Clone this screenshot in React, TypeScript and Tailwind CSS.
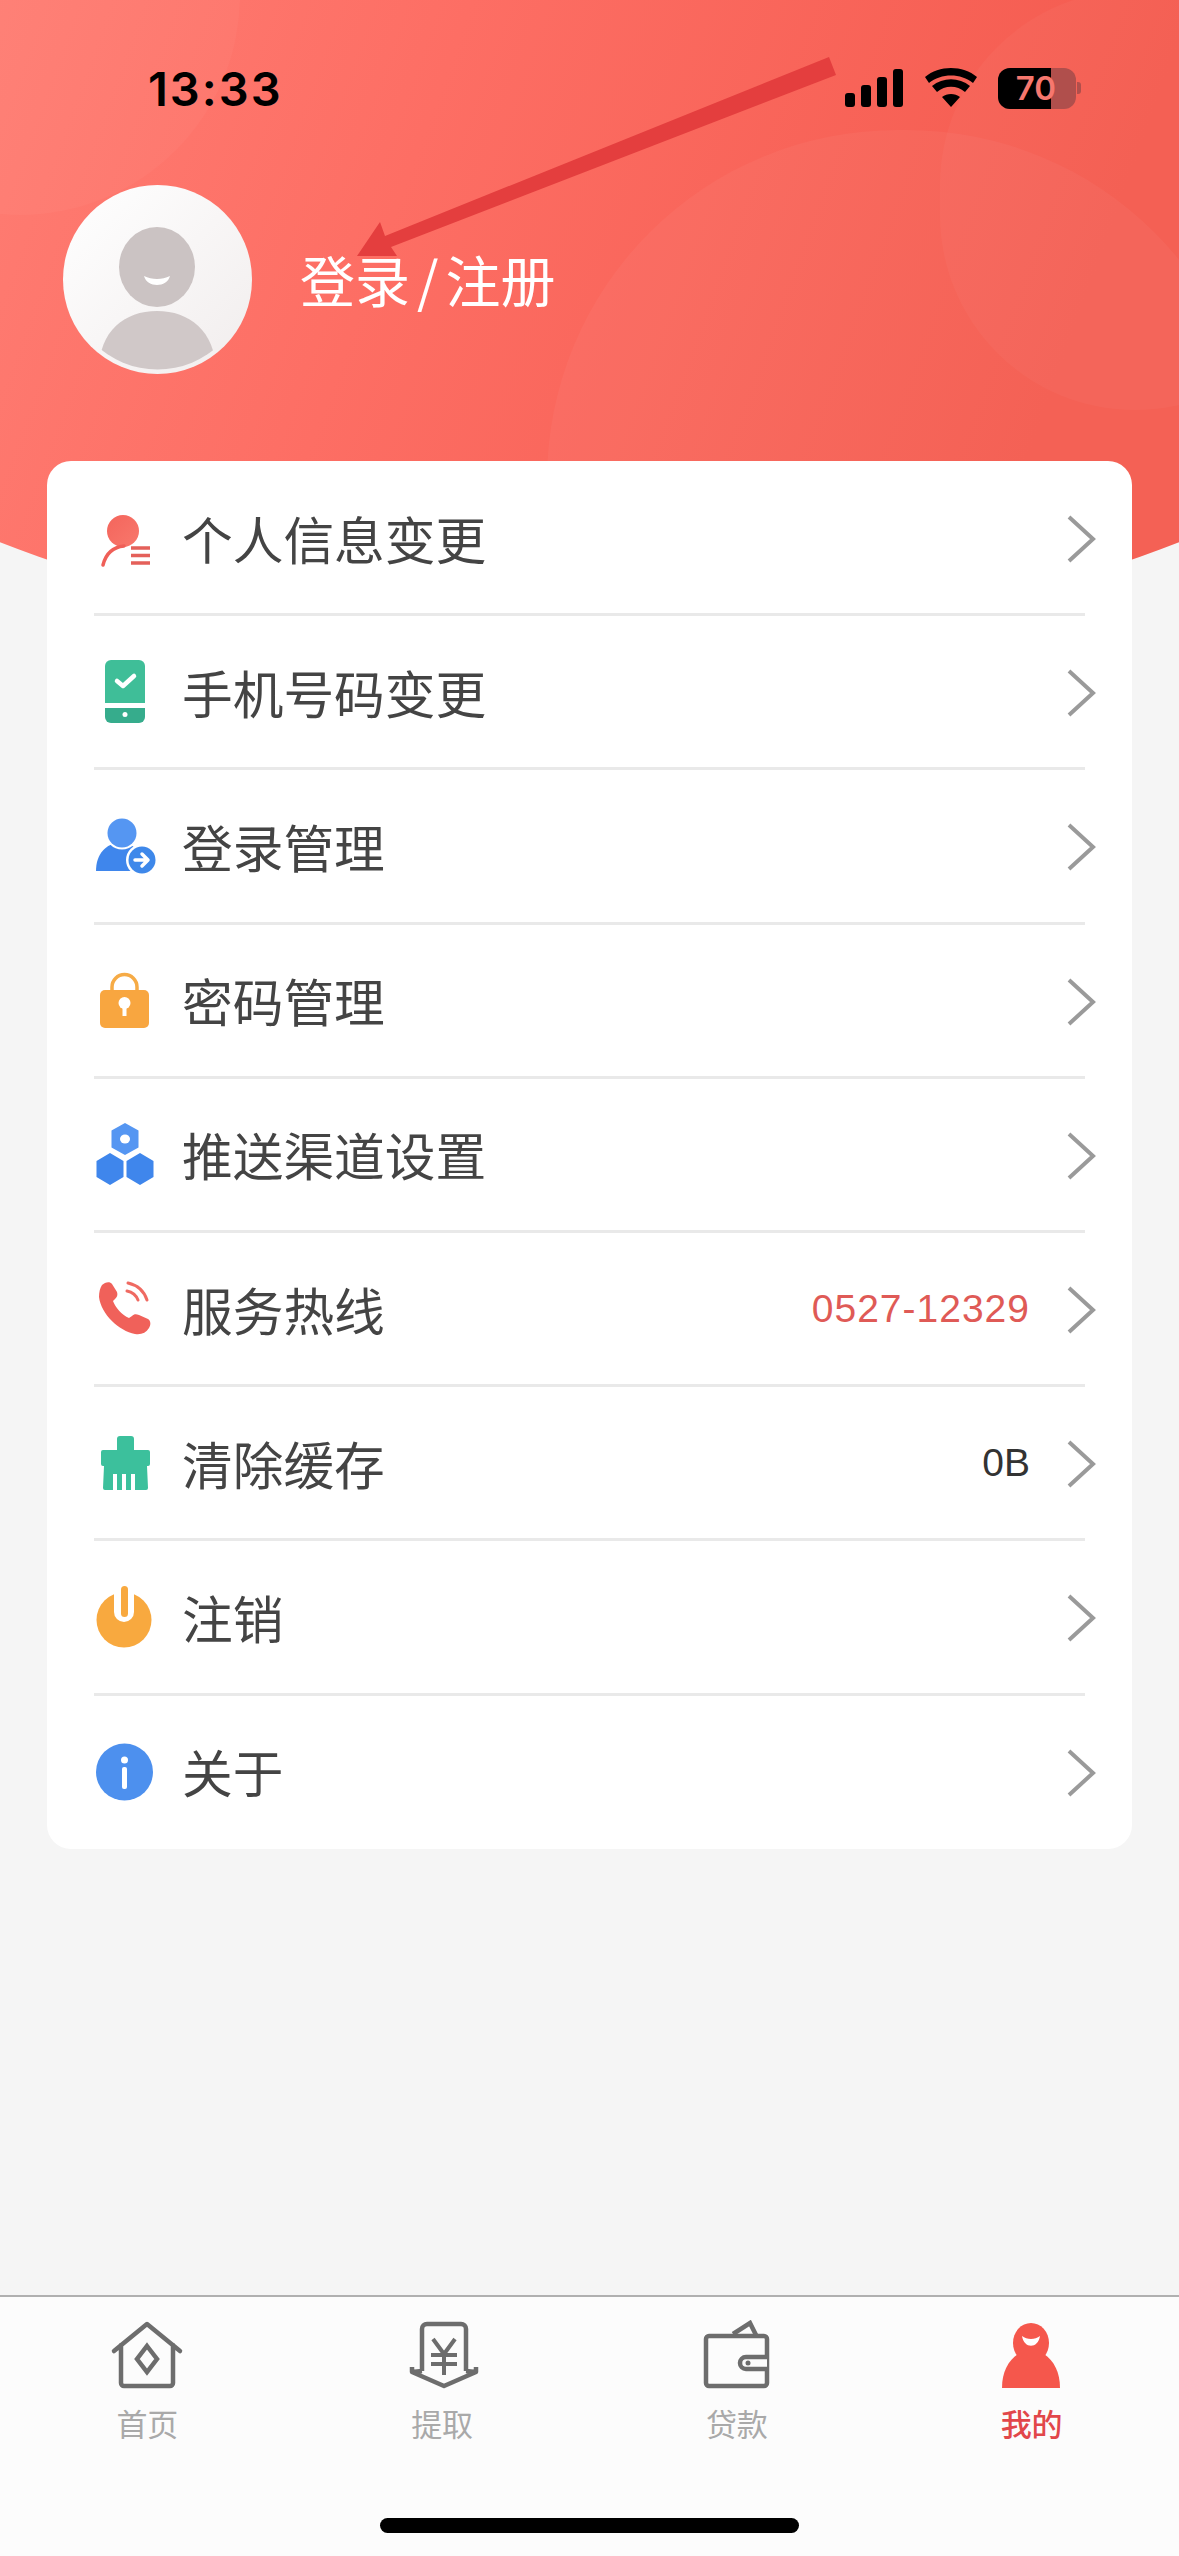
import type { ReactNode } from "react";

const cjk = "font-['Noto_Sans_CJK_SC','Noto_Sans',sans-serif]";

const IconPerson = () => (
  <svg width="60" height="60" viewBox="95 508 60 60">
    <defs>
      <linearGradient id="gr1" x1="0" y1="0" x2="1" y2="1">
        <stop offset="0" stopColor="#f4655c" />
        <stop offset="1" stopColor="#f8786c" />
      </linearGradient>
    </defs>
    <circle cx="123" cy="531" r="16" fill="url(#gr1)" />
    <path d="M103 565 C106 553 114 547 124 546" fill="none" stroke="#ef5f58" strokeWidth="3.500" strokeLinecap="round" />
    <path d="M131 548h19M131 555.500h19M131 563h19" stroke="#e4605a" strokeWidth="3.500" />
  </svg>
);

const IconPhone = () => (
  <svg width="60" height="70" viewBox="96 659 60 70">
    <path d="M112 662h28a6 6 0 0 1 6 6v37h-40v-37a6 6 0 0 1 6-6z" fill="#3fbe98" />
    <path d="M106 710h40v9a6 6 0 0 1-6 6h-28a6 6 0 0 1-6-6z" fill="#36ac8c" />
    <path d="M118 683l6 5 11-10" fill="none" stroke="#fff" strokeWidth="4.500" strokeLinecap="round" strokeLinejoin="round" />
    <circle cx="126" cy="716.500" r="2.500" fill="#fff" />
  </svg>
);

const IconLogin = () => (
  <svg width="64" height="60" viewBox="93 820 64 60">
    <path d="M96 875c0-17 10-28 24-28s22 8 24 28z" fill="#3f86ec" />
    <circle cx="122" cy="837" r="16.500" fill="#fff" />
    <circle cx="122" cy="837" r="14.500" fill="#5596f2" />
    <circle cx="142" cy="864" r="16" fill="#fff" />
    <circle cx="142" cy="864" r="13.500" fill="#3e88ea" />
    <path d="M135 864h12M142 858l6 6-6 6" fill="none" stroke="#fff" strokeWidth="3.500" strokeLinecap="round" strokeLinejoin="round" />
  </svg>
);

const IconLock = () => (
  <svg width="60" height="60" viewBox="96 973 60 60">
    <path d="M113 995v-6a12.500 12.500 0 0 1 25 0v6" fill="none" stroke="#f6ab46" strokeWidth="3.500" />
    <rect x="101" y="992" width="49" height="38" rx="5" fill="#f8a640" />
    <circle cx="125.500" cy="1005" r="6" fill="#fff" />
    <rect x="123.500" y="1005" width="4" height="13" fill="#fff" />
  </svg>
);

const IconHex = () => (
  <svg width="64" height="64" viewBox="94 1125 64 64">
    <path d="M126 1125l13.500 7.500v17l-13.500 7.500-13.500-7.500v-17z" fill="#5596f2" />
    <ellipse cx="126" cy="1141" rx="5" ry="4.500" fill="#fff" />
    <path d="M111 1155l13.500 8v16l-13.500 8-13.500-8v-16z" fill="#3f86ec" />
    <path d="M141 1155l13.500 8v16l-13.500 8-13.500-8v-16z" fill="#3f86ec" />
  </svg>
);

const IconCall = () => (
  <svg width="60" height="60" viewBox="96 1280 60 60">
    <path
      d="M103 1286c3-3 8-4 10-1l5 8c1 3 0 5-2 7l-2 2c2 6 9 14 16 17l3-2c2-2 4-2 7-1l9 4c3 2 3 6 1 9-3 5-8 7-14 6-16-3-34-20-36-37 0-5 1-9 3-12z"
      fill="#f0615a"
    />
    <path d="M128 1292c5 1 9 4 11 9M129 1284c9 2 16 8 19 17" fill="none" stroke="#ef6a62" strokeWidth="3" strokeLinecap="round" />
  </svg>
);

const IconBrush = () => (
  <svg width="60" height="60" viewBox="96 1434 60 60">
    <path
      d="M119 1437h13a3 3 0 0 1 3 3v11h14a2 2 0 0 1 2 2v12a2 2 0 0 1-2 2h-1l1 22a2 2 0 0 1-2 2h-41a2 2 0 0 1-2-2l1-22h-1a2 2 0 0 1-2-2v-12a2 2 0 0 1 2-2h14v-11a3 3 0 0 1 3-3z"
      fill="#3cc09c"
    />
    <path d="M114 1475h4v16h-4zM123 1475h4v16h-4zM132 1475h4v16h-4z" fill="#fff" />
  </svg>
);

const IconPower = () => (
  <svg width="60" height="68" viewBox="96 1584 60 68">
    <circle cx="125" cy="1621" r="27.500" fill="#f8a93f" />
    <rect x="115" y="1584" width="20" height="39" rx="10" fill="#fff" />
    <rect x="122" y="1587" width="7" height="31" rx="3.500" fill="#f8a93f" />
  </svg>
);

const IconInfo = () => (
  <svg width="60" height="60" viewBox="96 1743 60 60">
    <circle cx="125.500" cy="1773" r="28.500" fill="#4d90ee" />
    <circle cx="125.500" cy="1761" r="3.500" fill="#fff" />
    <rect x="123" y="1768" width="5" height="22" rx="2" fill="#fff" />
  </svg>
);

const Chevron = () => (
  <svg width="30" height="50" viewBox="0 0 30 50" className="shrink-0 -mr-[11px] ml-[36px] mt-[2px]">
    <path d="M3 3l24 22-24 22" fill="none" stroke="#9a9a9a" strokeWidth="4" />
  </svg>
);

type RowProps = { icon: ReactNode; label: string; value?: string; valueClass?: string; last?: boolean };

const Row = ({ icon, label, value, valueClass, last }: RowProps) => (
  <div className="h-[154.2px] mx-[47px] relative flex items-center">
    <div className="w-[70px] -ml-[4px] shrink-0 flex justify-center">{icon}</div>
    <div className={`${cjk} flex-1 ml-[22px] text-[50.7px] leading-none text-[#444444]`}>{label}</div>
    {value && <div className={`font-['Liberation_Sans',sans-serif] text-[39px] ${valueClass}`}>{value}</div>}
    <Chevron />
    {!last && <div className="absolute left-0 right-0 -bottom-[1px] h-[3px] bg-[#e9e9e9]" />}
  </div>
);

const TabHome = () => (
  <svg width="74" height="70" viewBox="110 2319 74 70">
    <path d="M114 2350L147 2323l33 27M121 2344v38a3 3 0 0 0 3 3h46a3 3 0 0 0 3-3v-38" fill="none" stroke="#6d6d6d" strokeWidth="4.500" strokeLinejoin="round" strokeLinecap="round" />
    <path d="M147 2345l10 13-10 13-10-13z" fill="none" stroke="#6d6d6d" strokeWidth="4.500" />
  </svg>
);

const TabWithdraw = () => (
  <svg width="74" height="70" viewBox="405 2319 74 70">
    <path d="M422 2370v-42a5 5 0 0 1 5-5h34a5 5 0 0 1 5 5v42" fill="none" stroke="#6d6d6d" strokeWidth="4.500" />
    <path d="M412 2366v5l32 14 32-14v-5M412 2371l10-1M476 2371l-10-1" fill="none" stroke="#6d6d6d" strokeWidth="4.500" strokeLinejoin="round" />
    <path d="M433 2338l11 15 11-15M431 2354h26M431 2363h26M444 2353v21" fill="none" stroke="#6d6d6d" strokeWidth="4" />
  </svg>
);

const TabWallet = () => (
  <svg width="74" height="70" viewBox="700 2319 74 70">
    <path d="M710 2335h54a3 3 0 0 1 3 3v44a3 3 0 0 1-3 3h-55a3 3 0 0 1-3-3v-44a3 3 0 0 1 3-3z" fill="none" stroke="#6d6d6d" strokeWidth="4.500" />
    <path d="M733 2333l17-11 6 12" fill="none" stroke="#6d6d6d" strokeWidth="4.500" />
    <path d="M767 2356h-21a6 6 0 0 0 0 12h21" fill="#fcfcfc" stroke="#6d6d6d" strokeWidth="4.500" />
    <circle cx="748" cy="2362" r="2.500" fill="#6d6d6d" />
  </svg>
);

const TabMe = () => (
  <svg width="74" height="70" viewBox="995 2319 74 70">
    <ellipse cx="1031" cy="2342" rx="18" ry="20" fill="#f5574c" />
    <path d="M1002 2387c0-16 6-27 16-34h26c10 7 16 18 16 34z" fill="#f5574c" />
    <path d="M1022 2335c2 13 16 13 18 0-5 4-13 4-18 0z" fill="#fff" />
  </svg>
);

const Tab = ({ icon, label, active }: { icon: ReactNode; label: string; active?: boolean }) => (
  <div className="flex flex-col items-center">
    {icon}
    <div className={`${cjk} mt-[15px] text-[31px] leading-[36px] ${active ? "text-[#e2474a] font-medium" : "text-[#a9a9a9]"}`}>{label}</div>
  </div>
);

const StatusBar = () => (
  <div className="relative h-[44px] flex items-center justify-between pl-[148px] pr-[98px]">
    <span className="font-['Inter',sans-serif] text-[47px] font-semibold tracking-[2px] leading-none text-black">13:33</span>
    <div className="flex items-center">
      <svg width="60" height="40" viewBox="0 0 60 40">
        <rect x="1" y="25" width="10" height="14" rx="3" />
        <rect x="17" y="17" width="10" height="22" rx="3" />
        <rect x="33" y="9" width="10" height="30" rx="3" />
        <rect x="49" y="1" width="10" height="38" rx="3" />
      </svg>
      <svg width="52" height="40" viewBox="0 0 52 40" className="ml-[21px]">
        <path d="M26 39l-9-10c5-4 13-4 18 0zM12 24l-5-6c11-9 27-9 38 0l-5 6c-8-7-20-7-28 0zM4 15l-4-6C14-3 38-3 52 9l-4 6C36 5 16 5 4 15z" />
      </svg>
      <div className="ml-[21px] relative w-[78px] h-[41px] rounded-[12px] overflow-hidden bg-[#b04f4c] flex items-center justify-center">
        <div className="absolute left-0 top-0 bottom-0 w-[53px] bg-black" />
        <span className="relative font-['Inter',sans-serif] font-semibold text-[33px] leading-none text-[#f6776e] pr-[2px]">70</span>
      </div>
      <div className="w-[4px] h-[12px] bg-[#b04f4c] rounded-r-[3px] ml-[1px]" />
    </div>
  </div>
);

const Avatar = () => (
  <div className="w-[189px] h-[189px] rounded-full bg-gradient-to-br from-white to-[#f1eded] overflow-hidden shrink-0">
    <svg width="189" height="189" viewBox="63 185 189 189">
      <defs>
        <clipPath id="avatarClip">
          <circle cx="157.500" cy="279.500" r="90" />
        </clipPath>
      </defs>
      <ellipse cx="157" cy="267" rx="38" ry="40" fill="#cbc3c3" />
      <path d="M144 276c3 12 23 12 26 0-8 4-18 4-26 0z" fill="#fff" />
      <path d="M99 375c-2-42 24-64 58-64s60 22 59 64z" fill="#d0c8c8" clipPath="url(#avatarClip)" />
    </svg>
  </div>
);

const Arrow = () => (
  <svg width="1179" height="300" viewBox="0 0 1179 300" className="absolute left-0 top-0 pointer-events-none">
    <polygon points="357,256 380,222 385,236 829,57 836,75 391,247 397,256" fill="#e43e3e" />
  </svg>
);

export default function App() {
  return (
    <div className="relative w-[1179px] h-[2556px] overflow-hidden bg-[#f5f5f5] flex flex-col">
      {/* red header backdrop */}
      <div className="absolute left-[-700px] top-[-1300px] w-[2579px] h-[1950px] rounded-[50%] overflow-hidden bg-[linear-gradient(110deg,#ff857b_27%,#fd6e64_50%,#f45b4f_72%)]">
        <div className="absolute left-[500px] top-[1000px] w-[440px] h-[515px] rounded-full bg-white/[0.03]" />
        <div className="absolute left-[1247px] top-[1430px] w-[710px] h-[700px] rounded-full bg-white/[0.04]" />
        <div className="absolute left-[1640px] top-[1290px] w-[390px] h-[420px] rounded-full bg-white/[0.03]" />
      </div>

      <div className="relative pt-[66px]">
        <StatusBar />
        <div className="flex items-start pl-[63px] pt-[75px] h-[351px]">
          <Avatar />
          <div className={`${cjk} ml-[48px] mt-[66px] text-[55px] leading-none text-white flex items-center`}>
            <span>登录</span>
            <span className="mx-[7px]">/</span>
            <span>注册</span>
          </div>
        </div>
      </div>

      <Arrow />

      <div className="relative mx-[47px] bg-white rounded-[24px]">
        <Row icon={<IconPerson />} label="个人信息变更" />
        <Row icon={<IconPhone />} label="手机号码变更" />
        <Row icon={<IconLogin />} label="登录管理" />
        <Row icon={<IconLock />} label="密码管理" />
        <Row icon={<IconHex />} label="推送渠道设置" />
        <Row icon={<IconCall />} label="服务热线" value="0527-12329" valueClass="text-[#df5a56] tracking-[1px]" />
        <Row icon={<IconBrush />} label="清除缓存" value="0B" valueClass="text-[#333333]" />
        <Row icon={<IconPower />} label="注销" />
        <Row icon={<IconInfo />} label="关于" last />
      </div>

      <div className="flex-1" />

      <div className="relative h-[261px] bg-[#fcfcfc] border-t-2 border-[#b0b0b0] grid grid-cols-4 pt-[23px]">
        <Tab icon={<TabHome />} label="首页" />
        <Tab icon={<TabWithdraw />} label="提取" />
        <Tab icon={<TabWallet />} label="贷款" />
        <Tab icon={<TabMe />} label="我的" active />
        <div className="absolute left-[380px] top-[221px] w-[419px] h-[15px] rounded-full bg-black" />
      </div>
    </div>
  );
}
